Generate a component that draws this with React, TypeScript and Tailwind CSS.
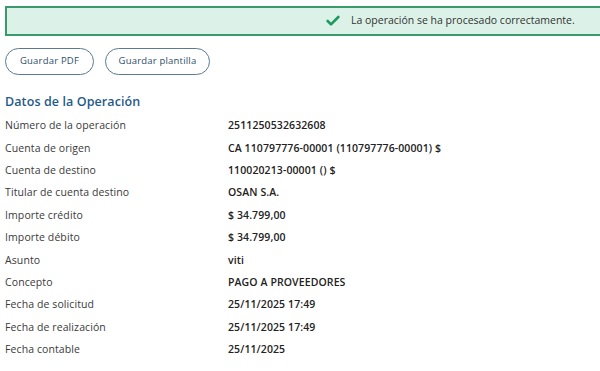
import { Check } from 'lucide-react'

/* ── Data ── */

const ROWS: [string, string][] = [
  ['Número de la operación', '2511250532632608'],
  ['Cuenta de origen', 'CA 110797776-00001 (110797776-00001) $'],
  ['Cuenta de destino', '110020213-00001 () $'],
  ['Titular de cuenta destino', 'OSAN S.A.'],
  ['Importe crédito', '$ 34.799,00'],
  ['Importe débito', '$ 34.799,00'],
  ['Asunto', 'viti'],
  ['Concepto', 'PAGO A PROVEEDORES'],
  ['Fecha de solicitud', '25/11/2025 17:49'],
  ['Fecha de realización', '25/11/2025 17:49'],
  ['Fecha contable', '25/11/2025'],
]

/* ── Component ── */

export default function App() {
  return (
    <div className="w-[600px] h-[371px] overflow-hidden bg-white font-['Open_Sans',sans-serif]">
      {/* Success banner */}
      <div className="mt-[6px] ml-[5px] w-[600px] h-[30px] border-2 border-[#3a9a6e] bg-[#dcf2e8] flex items-center pl-[318px]">
        <Check className="w-[16px] h-[16px] text-[#1f9a5e]" strokeWidth={4} />
        <span className="ml-[10px] text-[10.5px] text-[#333]">La operación se ha procesado correctamente.</span>
      </div>

      {/* Actions */}
      <div className="flex gap-[11px] mt-[12px] ml-[5px]">
        <button className="h-[27px] w-[89px] rounded-full border border-[#5b7a90] text-[9.5px] tracking-[0.2px] text-[#2d4f6a]">
          Guardar PDF
        </button>
        <button className="h-[27px] w-[105px] rounded-full border border-[#5b7a90] text-[9.5px] tracking-[0.2px] text-[#2d4f6a]">
          Guardar plantilla
        </button>
      </div>

      {/* Details */}
      <h2 className="mt-[19px] ml-[5px] text-[12.5px] font-semibold tracking-[0.1px] text-[#1f5a8a] leading-[16px]">
        Datos de la Operación
      </h2>
      <div className="mt-[5px] ml-[5px]">
        {ROWS.map(([label, value]) => (
          <div key={label} className="grid grid-cols-[223px_1fr] h-[22.4px] items-center text-[10.5px]">
            <span className="text-[#3a3a3a] tracking-[0.1px]">{label}</span>
            <span className="font-semibold text-[#222] tracking-[0.1px]">{value}</span>
          </div>
        ))}
      </div>
    </div>
  )
}
